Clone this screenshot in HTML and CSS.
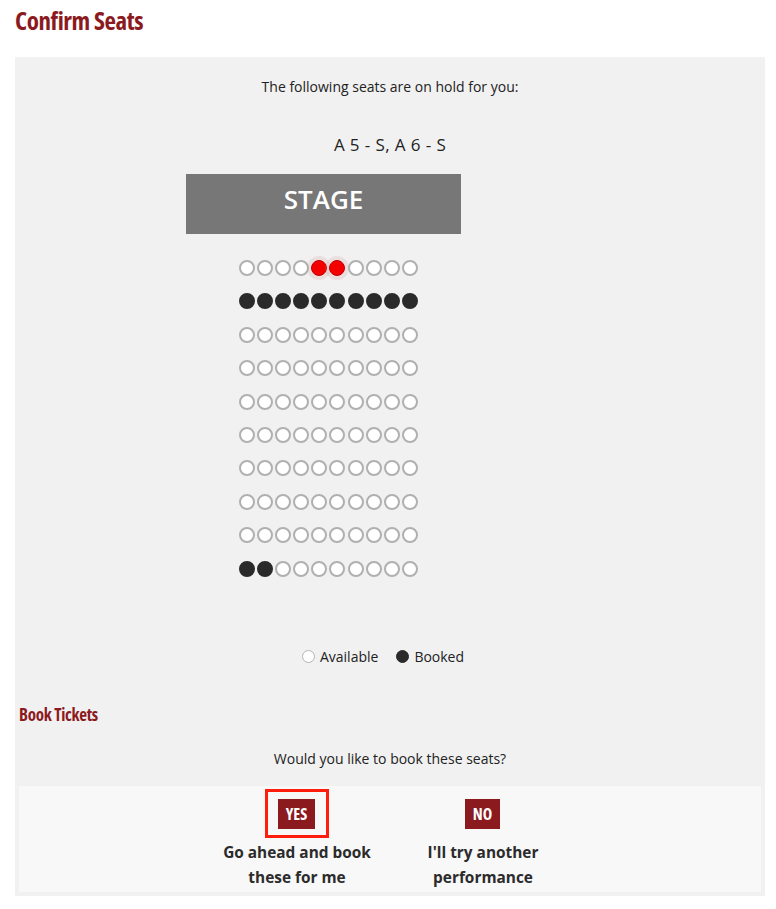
FILE: index.html
```html
<!DOCTYPE html>
<html lang="en">
<head>
<meta charset="utf-8">
<title>Confirm Seats</title>
<link rel="stylesheet" href="styles.css">
</head>
<body>
<div class="page">
  <h1 class="title">Confirm Seats</h1>
  <div class="panel">
    <p class="hold-text">The following seats are on hold for you:</p>
    <p class="seat-list">A 5 - S, A 6 - S</p>
    <div class="seatmap">
      <div class="stage">STAGE</div>
      <div class="rows">
        <div class="row"><span class="seat"></span><span class="seat"></span><span class="seat"></span><span class="seat"></span><span class="seat selected"></span><span class="seat selected"></span><span class="seat"></span><span class="seat"></span><span class="seat"></span><span class="seat"></span></div>
        <div class="row"><span class="seat booked"></span><span class="seat booked"></span><span class="seat booked"></span><span class="seat booked"></span><span class="seat booked"></span><span class="seat booked"></span><span class="seat booked"></span><span class="seat booked"></span><span class="seat booked"></span><span class="seat booked"></span></div>
        <div class="row"><span class="seat"></span><span class="seat"></span><span class="seat"></span><span class="seat"></span><span class="seat"></span><span class="seat"></span><span class="seat"></span><span class="seat"></span><span class="seat"></span><span class="seat"></span></div>
        <div class="row"><span class="seat"></span><span class="seat"></span><span class="seat"></span><span class="seat"></span><span class="seat"></span><span class="seat"></span><span class="seat"></span><span class="seat"></span><span class="seat"></span><span class="seat"></span></div>
        <div class="row"><span class="seat"></span><span class="seat"></span><span class="seat"></span><span class="seat"></span><span class="seat"></span><span class="seat"></span><span class="seat"></span><span class="seat"></span><span class="seat"></span><span class="seat"></span></div>
        <div class="row"><span class="seat"></span><span class="seat"></span><span class="seat"></span><span class="seat"></span><span class="seat"></span><span class="seat"></span><span class="seat"></span><span class="seat"></span><span class="seat"></span><span class="seat"></span></div>
        <div class="row"><span class="seat"></span><span class="seat"></span><span class="seat"></span><span class="seat"></span><span class="seat"></span><span class="seat"></span><span class="seat"></span><span class="seat"></span><span class="seat"></span><span class="seat"></span></div>
        <div class="row"><span class="seat"></span><span class="seat"></span><span class="seat"></span><span class="seat"></span><span class="seat"></span><span class="seat"></span><span class="seat"></span><span class="seat"></span><span class="seat"></span><span class="seat"></span></div>
        <div class="row"><span class="seat"></span><span class="seat"></span><span class="seat"></span><span class="seat"></span><span class="seat"></span><span class="seat"></span><span class="seat"></span><span class="seat"></span><span class="seat"></span><span class="seat"></span></div>
        <div class="row"><span class="seat booked"></span><span class="seat booked"></span><span class="seat"></span><span class="seat"></span><span class="seat"></span><span class="seat"></span><span class="seat"></span><span class="seat"></span><span class="seat"></span><span class="seat"></span></div>
      </div>
    </div>
    <div class="legend">
      <span class="legend-item"><span class="dot"></span>Available</span>
      <span class="legend-item"><span class="dot booked"></span>Booked</span>
    </div>
    <h2 class="subtitle">Book Tickets</h2>
    <p class="question">Would you like to book these seats?</p>
    <div class="choices">
      <div class="choice">
        <span class="focus-ring"><span class="btn">YES</span></span>
        <span class="choice-text">Go ahead and book these for me</span>
      </div>
      <div class="choice">
        <span class="plain-ring"><span class="btn">NO</span></span>
        <span class="choice-text">I'll try another performance</span>
      </div>
    </div>
  </div>
</div>
</body>
</html>
```
FILE: styles.css
```css
html, body {
  margin: 0;
  padding: 0;
  background: #fff;
}
body {
  font-family: "Open Sans", "Liberation Sans", sans-serif;
  color: #222;
}
.page {
  width: 750px;
  padding: 0 11px 0 15px;
}
.title {
  margin: 0;
  padding-top: 5px;
  font-family: "Open Sans", "DejaVu Sans Condensed", sans-serif;
  font-stretch: 75%;
  font-weight: 700;
  font-size: 25px;
  letter-spacing: -0.4px;
  line-height: 30px;
  color: #8b1a1e;
  margin-bottom: 22px;
}
.panel {
  background: #f1f1f1;
  padding: 4px;
  display: flex;
  flex-direction: column;
}
.hold-text {
  margin: 16px 0 0;
  text-align: center;
  font-size: 14px;
  line-height: 20px;
}
.seat-list {
  margin: 36px 0 0;
  text-align: center;
  font-size: 17px;
  line-height: 24px;
  letter-spacing: 0.4px;
}
.seatmap {
  margin: 17px 0 0 167px;
  display: flex;
  flex-direction: column;
  align-items: flex-start;
}
.stage {
  width: 275px;
  height: 60px;
  box-sizing: border-box;
  padding-top: 7px;
  background: #777;
  color: #fff;
  text-align: center;
  font-size: 26px;
  font-weight: 600;
  line-height: 36px;
}
.rows {
  margin: 26px 0 0 53px;
  display: flex;
  flex-direction: column;
  gap: 17.4px;
}
.row {
  display: flex;
  gap: 2.1px;
}
.seat {
  width: 16px;
  height: 16px;
  box-sizing: border-box;
  border-radius: 50%;
  background: #fff;
  border: 2px solid #b0b0b0;
}
.seat.booked {
  background: #2a2a2a;
  border-color: #2a2a2a;
}
.seat.selected {
  background: #f40000;
  border: 1px solid #c40000;
  box-shadow: 0 0 0 4px rgba(205, 140, 140, 0.18);
}
.legend {
  margin-top: 70px;
  display: flex;
  justify-content: center;
  gap: 18px;
  font-size: 14px;
  line-height: 20px;
  padding-right: 14px;
}
.legend-item {
  display: flex;
  align-items: center;
  gap: 5px;
}
.dot {
  width: 13px;
  height: 13px;
  box-sizing: border-box;
  border-radius: 50%;
  background: #fff;
  border: 1px solid #b5b5b5;
}
.dot.booked {
  background: #2a2a2a;
  border-color: #2a2a2a;
}
.subtitle {
  margin: 36px 0 0;
  font-family: "Open Sans", "DejaVu Sans Condensed", sans-serif;
  font-stretch: 75%;
  font-weight: 700;
  font-size: 17px;
  letter-spacing: -0.3px;
  line-height: 24px;
  color: #8b1a1e;
}
.question {
  margin: 22px 0 0;
  text-align: center;
  font-size: 14px;
  line-height: 20px;
}
.choices {
  margin-top: 17px;
  background: #f8f8f8;
  padding: 3px 0 2px;
  display: flex;
  justify-content: center;
  gap: 16px;
}
.choice {
  width: 170px;
  display: flex;
  flex-direction: column;
  align-items: center;
}
.focus-ring, .plain-ring {
  display: flex;
  padding: 7px 11px 6px 10px;
  border: 3px solid #ff1e0e;
}
.plain-ring {
  border-color: transparent;
}
.btn {
  display: block;
  background: #8b1a1e;
  color: #fff;
  font-family: "Open Sans", "DejaVu Sans Condensed", sans-serif;
  font-stretch: 75%;
  font-weight: 700;
  font-size: 16px;
  line-height: 30px;
  padding: 0 8px;
}
.choice-text {
  margin-top: 2px;
  text-align: center;
  font-weight: 700;
  font-size: 15.4px;
  line-height: 25px;
  color: #2b2b2b;
}
```
